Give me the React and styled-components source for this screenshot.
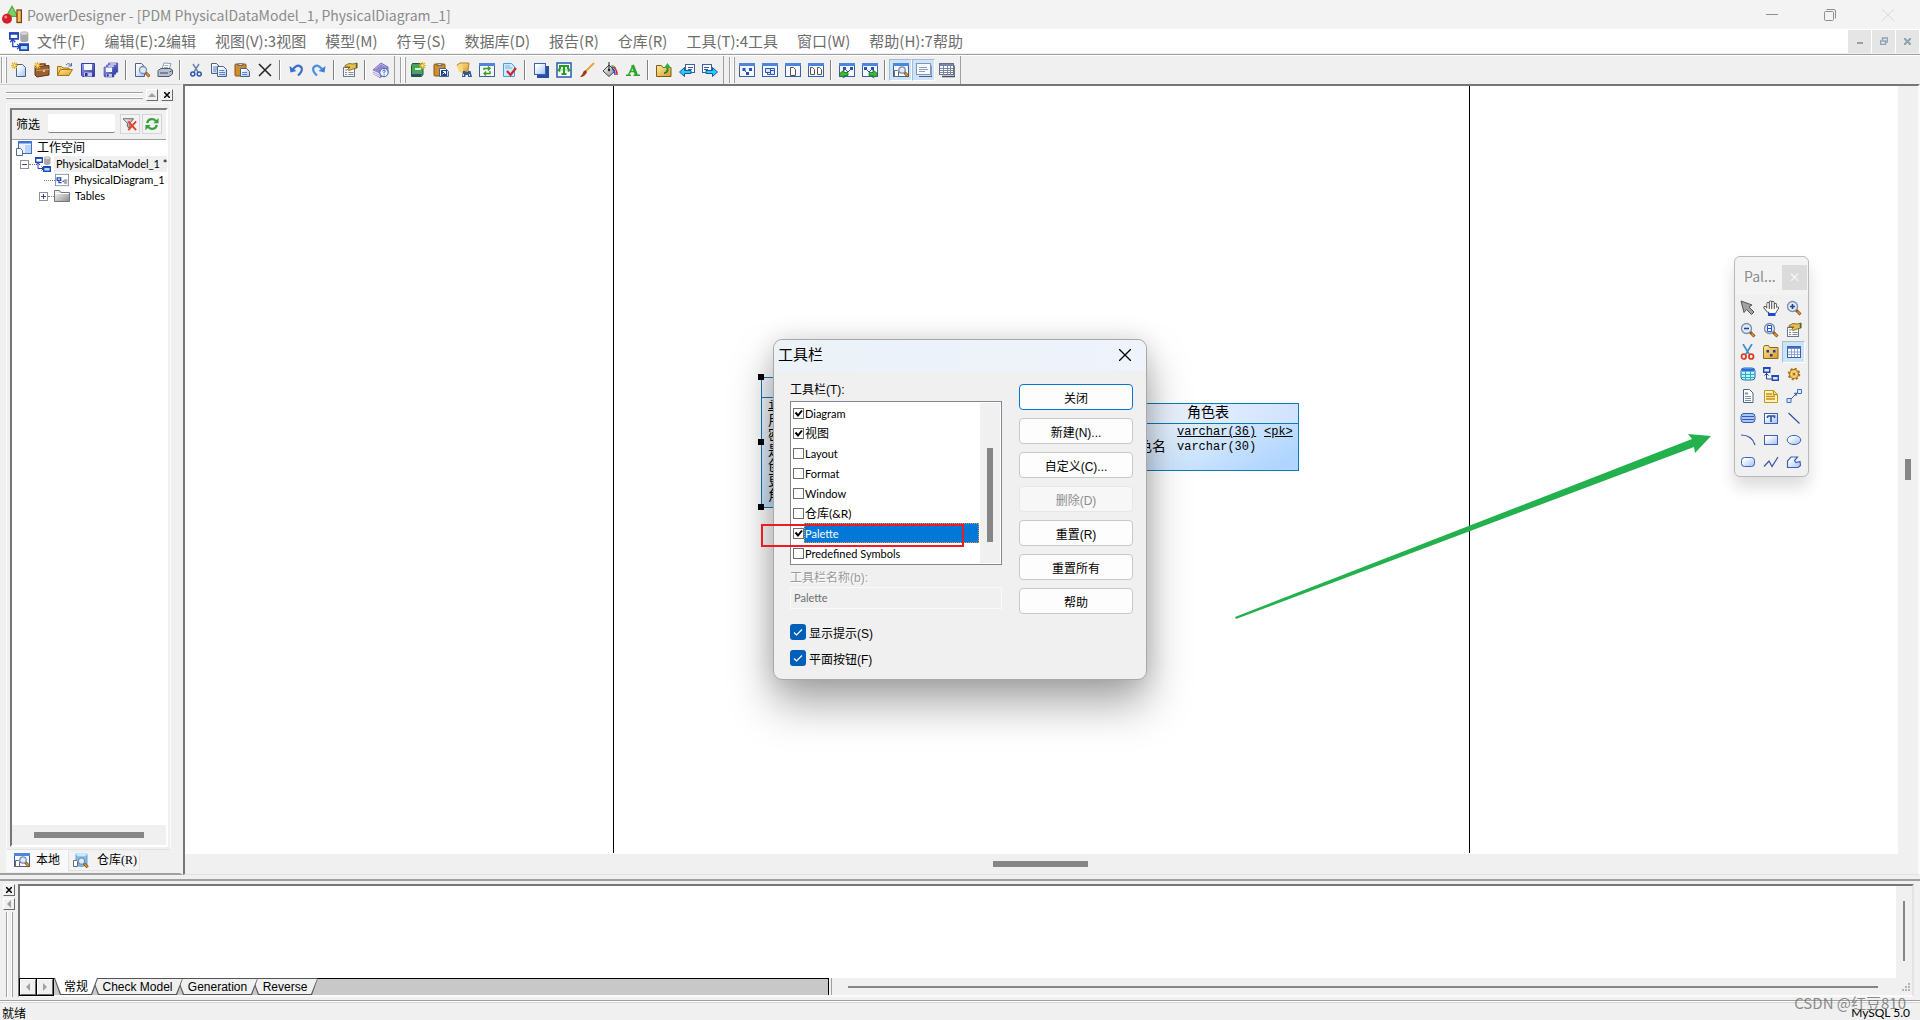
import React from "react";
import styled, { createGlobalStyle, css } from "styled-components";

const GlobalStyle = createGlobalStyle`
  * {
    box-sizing: border-box;
  }
  body {
    margin: 0;
    background: #f0f0f0;
    color: #000;
    font-family: "Liberation Sans", "Noto Sans CJK SC", sans-serif;
    font-size: 12px;
    overflow: hidden;
  }
  button,
  input {
    font: inherit;
    color: inherit;
    margin: 0;
    padding: 0;
  }
  svg {
    display: block;
    flex: none;
  }
`;

/* ---------- icons ---------- */

const Gradients = () => (
  <svg width="0" height="0" style={{ position: "absolute" }} aria-hidden="true">
    <defs>
      <linearGradient id="blue" x1="0" y1="0" x2="1" y2="1">
        <stop offset="0.2" stopColor="#fff" />
        <stop offset="1" stopColor="#9fc0fb" />
      </linearGradient>
      <linearGradient id="gold" x1="0" y1="0" x2="1" y2="1">
        <stop offset="0" stopColor="#ffeaa0" />
        <stop offset="1" stopColor="#dd9a22" />
      </linearGradient>
      <linearGradient id="navy" x1="0" y1="0" x2="1" y2="1">
        <stop offset="0" stopColor="#9aa8f4" />
        <stop offset="1" stopColor="#2b2f9c" />
      </linearGradient>
      <linearGradient id="grey" x1="0" y1="0" x2="1" y2="1">
        <stop offset="0" stopColor="#fff" />
        <stop offset="1" stopColor="#8c8c90" />
      </linearGradient>
    </defs>
  </svg>
);

const Spark = ({ x = 3.5, y = 3.5 }) => (
  <g stroke="#e8b422" strokeWidth="1.2">
    <path d={`M${x} ${y - 3.5}v7M${x - 3.5} ${y}h7M${x - 2.5} ${y - 2.5}l5 5M${x + 2.5} ${y - 2.5}l-5 5`} />
    <circle cx={x} cy={y} r="1" fill="#fff6b0" stroke="none" />
  </g>
);

const Lens = ({ x = 8, y = 7, r = 4 }) => (
  <g>
    <path d={`M${x + r * 0.7} ${y + r * 0.7}L${x + r + 3} ${y + r + 3}`} stroke="#8a4c12" strokeWidth="3" />
    <path d={`M${x + r} ${y + r}l2.5 2.5`} stroke="#e79a3c" strokeWidth="1.4" />
    <circle cx={x} cy={y} r={r} fill="#dcebfa" stroke="#7d8ea6" strokeWidth="1.3" />
  </g>
);

const Frame = ({ children }) => (
  <g>
    <rect x="0.5" y="1.5" width="15" height="13" fill="#f4f8ff" stroke="#3c5f9d" />
    <path d="M0 2.500h16" stroke="#4f86dd" strokeWidth="3" />
    {children}
  </g>
);

const Disk = () => (
  <g>
    <path d="M1.5 1.5h13v13h-12l-1-1z" fill="url(#navy)" stroke="#3a3fae" />
    <path d="M4 2h8v6H4z" fill="#f3f5ff" />
    <path d="M4 10.500h8v4H4z" fill="#c4c8ea" />
    <path d="M5 11h2.500v3H5z" fill="#2b2f8c" />
  </g>
);

const Page = ({ x = 3, y = 1, w = 10, h = 14 }) => (
  <path
    d={`M${x + 0.5} ${y + 0.5}h${w - 4}l3 3v${h - 4}h-${w - 1}z`}
    fill="url(#blue)"
    stroke="#4c6484"
  />
);

const Clip = () => (
  <g>
    <rect x="1" y="2" width="11" height="12" rx="1" fill="#cf8f2d" stroke="#8a5510" />
    <path d="M4 3.500V2h1.500q1-2 2 0H9v1.500z" fill="#ddd" stroke="#555" strokeWidth="0.8" />
  </g>
);

const Tables = () => (
  <g>
    <rect x="0.700" y="1.700" width="6.600" height="4.600" fill="#fff" stroke="#2447b8" strokeWidth="1.400" />
    <path d="M0 2h8" stroke="#2447b8" strokeWidth="2" />
    <rect x="8.700" y="10.700" width="6.600" height="4.600" fill="#a8e0f8" stroke="#2447b8" strokeWidth="1.400" />
    <path d="M8 11h8" stroke="#2447b8" strokeWidth="2" />
    <path d="M3 6.500v6h5.500" stroke="#2447b8" fill="none" />
    <path d="M1 9l2-2.500L5 9M6.500 10.500l2 2-2 2" stroke="#2447b8" fill="none" />
  </g>
);

const ICONS = {
  logo: (
    <g>
      <path d="M8 1l4.500 8h-9z" fill="#7ccf62" stroke="#58a845" />
      <circle cx="4" cy="11" r="4" fill="#d61e28" />
      <circle cx="3" cy="9.500" r="1.200" fill="#f2878b" />
      <rect x="12" y="4" width="3.500" height="10" fill="#f6c054" stroke="#7a3b18" />
    </g>
  ),
  model: (
    <g>
      <Tables />
      <path d="M9 2v6q3 2 6.500 0V2z" fill="#a9a9a9" />
      <ellipse cx="12.200" cy="2" rx="3.200" ry="1.400" fill="#d9d9d9" stroke="#999" strokeWidth="0.500" />
    </g>
  ),
  newFile: (
    <g>
      <Page x={5} y={2} w={10} h={13} />
      <Spark />
    </g>
  ),
  briefcase: (
    <g>
      <path d="M6 4V2h5v2" fill="none" stroke="#6b3a14" strokeWidth="1.500" />
      <path d="M1 4.500l14-1v9.500l-12 2-2-2z" fill="#9c5f34" stroke="#5f3413" />
      <path d="M2 8.500l13-1" stroke="#d5a276" />
      <path d="M9 8h2v2H9z" fill="#e8c090" />
      <Spark />
    </g>
  ),
  open: (
    <g>
      <path d="M.5 13.500v-9h4l1.500 1.500h6v2" fill="#f6cd63" stroke="#a87618" />
      <path d="M.5 13.500l3-6h12l-3.500 6z" fill="url(#gold)" stroke="#a87618" />
      <path d="M9 3q3-3 5 .5M14.500 1v3h-3" fill="none" stroke="#3d6fb0" />
    </g>
  ),
  save: <Disk />,
  saveAll: (
    <g>
      <g transform="translate(4.500 0) scale(.7)">
        <Disk />
      </g>
      <g transform="translate(2.500 2) scale(.7)">
        <Disk />
      </g>
      <g transform="translate(0 4) scale(.75)">
        <Disk />
      </g>
    </g>
  ),
  preview: (
    <g>
      <Page x={1} />
      <Lens x={9} y={8} r={3.5} />
    </g>
  ),
  print: (
    <g>
      <path d="M5 7l2-6 7 .5-2 6z" fill="#fff" stroke="#6c86ab" strokeWidth="0.800" />
      <path d="M7.500 3.500h4M7 5.500h4" stroke="#8aa0c0" strokeWidth="0.800" />
      <path d="M1 8.500l3-2h9l2.500 1.500v4L12 14.500H1z" fill="#b7c1d0" stroke="#4d5b70" />
      <path d="M3 11h8M12.500 10l2-1" stroke="#39465a" />
    </g>
  ),
  cut: (
    <g fill="none" strokeWidth="1.500">
      <path d="M5 2l5 8M11 2l-5 8" stroke="#6a86ad" />
      <circle cx="4.800" cy="12" r="2" stroke="#2c56ae" />
      <circle cx="11.200" cy="12" r="2" stroke="#2c56ae" />
    </g>
  ),
  copy: (
    <g>
      <Page x={0} y={1} w={9} h={11} />
      <path d="M2 5h4M2 7h4M2 9h3" stroke="#5c87c8" />
      <Page x={6} y={4} w={10} h={11} />
      <path d="M8 8.500h5M8 10.500h6M8 12.500h6" stroke="#5c87c8" />
    </g>
  ),
  paste: (
    <g>
      <Clip />
      <Page x={6} y={6} w={10} h={9} />
      <path d="M8 10.500h5M8 12.500h5" stroke="#5c87c8" />
    </g>
  ),
  remove: <path d="M2 2l12 12M14 2L2 14" stroke="#222" strokeWidth="1.500" />,
  undo: (
    <g>
      <path d="M5 7q5-6 8.500-1.500Q15 9 10 13.500" fill="none" stroke="#3a6fce" strokeWidth="2.200" />
      <path d="M1.500 4l1 6.500 6-1.500z" fill="#3a6fce" />
    </g>
  ),
  redo: (
    <g>
      <path d="M11 7Q6 1 2.500 5.500 1 9 6 13.500" fill="none" stroke="#4a90e0" strokeWidth="2.200" />
      <path d="M14.500 4l-1 6.500-6-1.500z" fill="#3a7fd8" />
    </g>
  ),
  props: (
    <g>
      <rect x="1.500" y="5.500" width="11" height="9" fill="#fbfbf4" stroke="#6d7690" />
      <path d="M3 8h2M3 10.500h2M3 12.500h2M6.500 10.500h5M6.500 12.500h5" stroke="#7c8cae" />
      <path d="M3 3.500l4-2 4 .5 4-1v5l-4 1-4 1.500-1.500-1L8 5H3z" fill="#e6c04e" stroke="#77571a" strokeWidth="0.800" />
      <path d="M14.500 1v5" stroke="#4c6a38" strokeWidth="1.500" />
    </g>
  ),
  help: (
    <g>
      <path d="M0 8l8-7 7 4v6l-8 4.500-7-4z" fill="#9486d0" stroke="#6a5aac" strokeWidth="0.800" />
      <path d="M0 9l7 3.500M0 11l7 3.500" stroke="#ece8fa" strokeWidth="1.200" fill="none" />
      <path d="M2 7l6-5 5 3" stroke="#b9aee6" fill="none" />
      <circle cx="11" cy="10.500" r="4.200" fill="#e9f1ff" stroke="#3c62b8" />
      <path d="M9.700 9.300q.3-1.300 1.500-1.200 1.400.3.800 1.400l-.9 1v.8M11.100 12.300v1" fill="none" stroke="#2c50a8" />
    </g>
  ),
  greenBook: (
    <g>
      <path d="M1.500 3.500l1-2H13v11l-1.500 2h-10z" fill="#4aa35c" stroke="#1d5a2e" />
      <path d="M5 6h6v2H5z" fill="#d5f0d8" />
      <path d="M1.500 13h10" stroke="#30477f" strokeWidth="2" />
      <Spark x={12.500} />
    </g>
  ),
  pasteLink: (
    <g>
      <Clip />
      <Page x={6} y={6} w={10} h={9} />
      <rect x="8" y="8" width="6" height="6" fill="#22418e" />
      <path d="M9.500 12.500l3-3M10 9.500h2.500v2.500" stroke="#fff" fill="none" />
    </g>
  ),
  find: (
    <g>
      <path d="M1 3l3-2h9l-1 8-6 1z" fill="url(#gold)" stroke="#b1842a" />
      <path d="M1 3l2 7 4 1V5z" fill="#f8d873" />
      <path d="M7 9h2.500v6H6zM12 9h2.500l1.500 6h-4zM9 10h3v3H9z" fill="#31588f" />
      <path d="M7.500 12v2M13.500 12v2" stroke="#bfe0ff" />
    </g>
  ),
  refreshWin: (
    <Frame>
      <path d="M5 8V6.500h5M9 4.500l2 2-2 2M11 9v2.500H6M7 9.500l-2 2 2 2" fill="none" stroke="#3f9b1e" strokeWidth="1.400" />
    </Frame>
  ),
  check: (
    <g>
      <path d="M1.500 1.500h8l3 3v10h-11z" fill="#cdeafc" stroke="#4a9ed8" />
      <path d="M3 4h5M3 6h7" stroke="#7bb4e4" />
      <path d="M5 9l3.500 4L14 6" fill="none" stroke="#cf2430" strokeWidth="2.200" />
    </g>
  ),
  shadow: (
    <g>
      <rect x="4" y="4" width="12" height="12" fill="#27509c" />
      <rect x="1.500" y="1.500" width="11" height="11" fill="url(#blue)" stroke="#3c62ad" />
    </g>
  ),
  textFit: (
    <g>
      <rect x="1" y="1" width="14" height="14" fill="#fff" stroke="#2b57b8" strokeWidth="1.500" />
      <path d="M3 3h10v4h-2V5H9v6h1.500v2h-5v-2H7V5H5v2H3z" fill="#22a022" />
      <path d="M1 8l3-2v4zM15 8l-3-2v4zM4 8h8" fill="#22a022" stroke="#22a022" strokeWidth="0.500" />
    </g>
  ),
  brush: (
    <g>
      <path d="M15 1L7 9" stroke="#e2a63a" strokeWidth="2" />
      <path d="M8 10L6.500 8Q4 9 3.500 12L1 15q5 0 7-5z" fill="#a03a1a" />
    </g>
  ),
  bucket: (
    <g>
      <path d="M1 9l6-6 6 6-6 5.500z" fill="url(#grey)" stroke="#444" />
      <path d="M7 0v8" stroke="#222" />
      <circle cx="7" cy="8" r="1.200" fill="#222" />
      <path d="M10 5q5 1 5 8" fill="none" stroke="#d8262a" strokeWidth="1.500" />
      <path d="M10 7q3 1 3 6" fill="none" stroke="#2a48d8" strokeWidth="1.500" />
      <path d="M9 4q3-1 5 2" fill="none" stroke="#26a03a" />
    </g>
  ),
  fontA: (
    <g fill="none" stroke="#2ba52b">
      <path d="M3.500 13L8 3.500" strokeWidth="1.500" />
      <path d="M7.500 3l4 10" strokeWidth="3" />
      <path d="M5 9.500h5M1 13.200h5M8.500 13.200H15" strokeWidth="1.600" />
    </g>
  ),
  folderUp: (
    <g>
      <path d="M.5 14.500V3.500h5l1.500 2h8v9z" fill="url(#gold)" stroke="#7c5a1a" />
      <path d="M8 11q4 0 3.500-5" fill="none" stroke="#1c8c28" strokeWidth="2" />
      <path d="M8 6l3.500-5L15 6z" fill="#2cb038" />
    </g>
  ),
  back: (
    <g>
      <rect x="6.500" y="2.500" width="9" height="8" fill="#fff" stroke="#3c5f9d" />
      <path d="M9 5.500h5M9 7.500h4" stroke="#3c5f9d" />
      <path d="M.5 10l5-4.500v3H12v3H5.500v3z" fill="#23cdf4" stroke="#1755a8" />
    </g>
  ),
  forward: (
    <g>
      <rect x=".5" y="2.500" width="9" height="8" fill="#fff" stroke="#3c5f9d" />
      <path d="M2 5.500h5M2 7.500h4" stroke="#3c5f9d" />
      <path d="M15.500 10l-5-4.500v3H4v3h6.500v3z" fill="#23cdf4" stroke="#1755a8" />
    </g>
  ),
  diagram: (
    <Frame>
      <path d="M3.500 6h3v3h-3zM10 6h3v3h-3zM7 10h3v3H7z" fill="#2a52b4" />
      <path d="M5 8l3 3" stroke="#2a52b4" fill="none" />
    </Frame>
  ),
  diagramSel: (
    <Frame>
      <path d="M3.500 6.500h5v4h-5zM8.500 8.500h4v4h-4zM5.500 10.500v2h3M8.500 6.500h4v2" fill="#dbe6ff" stroke="#2a52b4" />
    </Frame>
  ),
  pageOne: (
    <Frame>
      <path d="M5.500 5.500h3l2 2v6h-5z" fill="#fff" stroke="#555" />
    </Frame>
  ),
  pageTwo: (
    <Frame>
      <path d="M2.500 5.500h2l2 2v5h-4zM9.500 5.500h2l2 2v5h-4z" fill="#fff" stroke="#555" />
    </Frame>
  ),
  diagramPrev: (
    <Frame>
      <path d="M4 5h3v3H4zM11 5h3v3h-3z" fill="#2a52b4" />
      <path d="M6 7l3 3 3-3" stroke="#2a52b4" fill="none" />
      <path d="M0 12l5-4v2.500h4v3H5V16z" fill="#3cb83c" stroke="#156e1d" strokeWidth="0.800" />
    </Frame>
  ),
  diagramNext: (
    <Frame>
      <path d="M2 5h3v3H2zM9 5h3v3H9z" fill="#2a52b4" />
      <path d="M4 7l3 3 3-3" stroke="#2a52b4" fill="none" />
      <path d="M16 12l-5-4v2.500H7v3h4V16z" fill="#3cb83c" stroke="#156e1d" strokeWidth="0.800" />
    </Frame>
  ),
  browser: (
    <Frame>
      <path d="M1.500 8.500h3l1 1v5h-4z" fill="#fff" stroke="#667" />
      <Lens x={9} y={8} r={3.200} />
    </Frame>
  ),
  output: (
    <g>
      <path d="M3 14.500h13v-11" fill="none" stroke="#4a5a80" />
      <rect x=".5" y="1.500" width="14" height="11" fill="#f7faff" stroke="#8193b8" />
      <path d="M3 5.500h8M3 7.500h9M3 9.500h6" stroke="#8f9fc4" />
    </g>
  ),
  results: (
    <g>
      <path d="M3 14.500h13v-11" fill="none" stroke="#4a4a60" strokeWidth="1.500" />
      <rect x=".5" y="1.500" width="14" height="11" fill="#fff" stroke="#66708c" />
      <path d="M1 3h13" stroke="#7a86a8" strokeWidth="2" />
      <path d="M1 6.500h13M1 8.500h13M1 10.500h13M4.500 4v9M8.500 4v9M11.500 4v9" stroke="#7a86a8" />
    </g>
  ),
  filterOff: (
    <g>
      <path d="M0 2h12L8 7v6l-3-2V7z" fill="url(#grey)" stroke="#555" />
      <path d="M6 5l9 10M15 5L6 15" stroke="#e8442c" strokeWidth="2.200" />
    </g>
  ),
  refresh: (
    <g fill="none" stroke="#35a03c" strokeWidth="2.600">
      <path d="M2.500 7q1-5 6-4.500 2 0 4 2M13.500 9q-1 5-6 4.500-2 0-4-2" />
      <path d="M15.500 1v6h-6zM.5 15V9h6z" fill="#35a03c" stroke="none" />
    </g>
  ),
  workspace: (
    <g>
      <rect x="2.500" y="1.500" width="13" height="12" fill="#eaf3ff" stroke="#3f6fc0" />
      <path d="M2 2.500h14" stroke="#3978dc" strokeWidth="2" />
      <path d="M9 5h6v8H9z" fill="#b8d4fb" />
      <path d="M.5 8.500h4l2 2v5h-6z" fill="#fff" stroke="#556a8a" />
    </g>
  ),
  diagramNode: (
    <g>
      <rect x=".5" y="1.500" width="15" height="13" fill="#fff" stroke="#7c8cae" />
      <path d="M2.500 5.500h4v3h-4zM8.500 9.500h3M4.500 9v2h3" fill="none" stroke="#2447b8" strokeWidth="1.500" />
      <path d="M10 7v5q2 1.500 4 0V7z" fill="#a9a9a9" />
    </g>
  ),
  folder: (
    <g>
      <path d="M.5 13.500v-11h5l1.500 2h8.500v9z" fill="url(#grey)" stroke="#777" />
      <path d="M1 5.500h14" stroke="#fff" />
    </g>
  ),
  repoTab: (
    <g>
      <path d="M3 2v11q5 3 11 0V2z" fill="#7fc3f2" stroke="#3f8fce" strokeWidth="0.800" />
      <ellipse cx="8.500" cy="2.500" rx="5.500" ry="1.800" fill="#c8e8fb" />
      <path d="M.5 8.500h3l1 1v5h-4z" fill="#fff" stroke="#667" />
      <Lens x={8.500} y={9} r={3.200} />
    </g>
  ),
  arrow: (
    <path d="M1 1l11 4-3 2 5 5-2.500 2.500-5-5L4 12.500z" fill="#a2a2a2" stroke="#555" />
  ),
  hand: (
    <g strokeLinecap="round">
      <path
        d="M2 7.500L5 11M5 3.500v6M7.500 2v7M10 2.500v6.500M12.500 4.500v5.500M14.500 8L12 12"
        stroke="#333"
        strokeWidth="3"
      />
      <path d="M4.500 8.500h8.500V12l-1 1.500H6.500L4 10.500z" fill="#fff" stroke="#333" />
      <path
        d="M2 7.500L5 11M5 3.500v6M7.500 2v7M10 2.500v6.500M12.500 4.500v5.500M14.500 8L12 12"
        stroke="#fff"
        strokeWidth="1.600"
      />
      <path d="M5 13h7.500v3H5z" fill="#1c4bd0" />
    </g>
  ),
  zoomIn: (
    <g>
      <Lens x={6.500} y={6.500} r={5} />
      <path d="M4 6.500h5M6.500 4v5" stroke="#2a3f9c" strokeWidth="1.600" />
    </g>
  ),
  zoomOut: (
    <g>
      <Lens x={6.500} y={6.500} r={5} />
      <path d="M4 6.500h5" stroke="#2a3f9c" strokeWidth="1.600" />
    </g>
  ),
  zoomPage: (
    <g>
      <Lens x={6.500} y={6.500} r={5} />
      <path d="M4.500 3.500h4v6h-4zM4.500 6.500h4" fill="#fff" stroke="#2a55d0" />
    </g>
  ),
  scissors: (
    <g fill="none" strokeWidth="1.700">
      <path d="M3 0l6 10M12 0L6 10" stroke="#3d8fce" />
      <ellipse cx="3.800" cy="12.500" rx="2.300" ry="2.500" stroke="#e0351c" />
      <ellipse cx="11.200" cy="12.500" rx="2.300" ry="2.500" stroke="#e0351c" />
    </g>
  ),
  package: (
    <g>
      <path d="M.5 14.500v-11l1-2h4l1 2h8.500v11z" fill="url(#gold)" stroke="#8c6a20" />
      <path d="M3.500 6h2.500v2.500H3.500zM10 6h2.500v2.500H10zM7 10h2.500v2.500H7z" fill="#1f3f8c" />
    </g>
  ),
  table: (
    <g>
      <rect x="1.500" y="2.500" width="13" height="11" fill="#fff" stroke="#3c5f9d" />
      <path d="M1 3.500h14" stroke="#3d68c4" strokeWidth="2.500" />
      <path d="M2 8h12M2 10.500h12M5.500 5v8M8.500 5v8M11.500 5v8" stroke="#8ba5d8" />
    </g>
  ),
  view: (
    <g>
      <rect x="1" y="2" width="14" height="12" rx="3" fill="#b6fafa" stroke="#2c6dc4" />
      <path d="M2 4h12" stroke="#2f6ce0" strokeWidth="3" />
      <path d="M1 8.500h14M1 11.500h14M5.500 5v9M10.500 5v9" stroke="#35a5c4" />
    </g>
  ),
  reference: (
    <g>
      <path d="M.7 1.700h6v4.600h-6zM9.300 9.700h6v4.600h-6z" fill="#dbe8ff" stroke="#2447b8" strokeWidth="1.400" />
      <path d="M0 2h7.500M8.500 10H16" stroke="#2447b8" strokeWidth="2" />
      <path d="M3.500 7v6H9M1.500 9.500l2-2 2 2" fill="none" stroke="#24408c" />
    </g>
  ),
  procedure: (
    <g>
      <circle cx="8" cy="8" r="4.500" fill="#f5c35a" stroke="#a8701a" strokeWidth="1.200" />
      <circle cx="8" cy="8" r="5.500" fill="none" stroke="#a8701a" strokeWidth="1.600" strokeDasharray="2.200 2.100" />
      <path d="M8 5v6M5 8h6" stroke="#fff2c8" />
      <circle cx="8" cy="8" r="1.500" fill="#a8701a" />
    </g>
  ),
  file: (
    <g>
      <path d="M3.500 1.500h6l3.500 3.500v9.500H3.500z" fill="#fff" stroke="#4c6484" />
      <path d="M5 4.500h3v2H5z" fill="#7f93b0" />
      <path d="M5 8.500h6M5 10.500h6M5 12.500h6" stroke="#7f93b0" />
    </g>
  ),
  note: (
    <g>
      <path d="M1.500 2.500h9l4 4v8h-13z" fill="#fff4c0" stroke="#c89418" />
      <path d="M10.500 2.500v4h4M3 6h6M3 8.500h9M3 11h9" stroke="#c89418" strokeWidth="1.400" fill="none" />
    </g>
  ),
  link: (
    <g>
      <path d="M4 12L11.500 4.500M8 5.500l2.500-.5-.5 3" fill="none" stroke="#3758a4" />
      <path d="M1 10.500h4v4H1zM11.500 1.500h4v4h-4z" fill="#dbe8ff" stroke="#3d6fd0" />
    </g>
  ),
  title: (
    <g>
      <rect x="1" y="3.500" width="14" height="9" rx="3" fill="#a9c6fb" stroke="#3558b0" />
      <path d="M2 6.500h12M2 9.500h12" stroke="#3558b0" />
    </g>
  ),
  textBox: (
    <g>
      <rect x="1.500" y="3.500" width="13" height="10" fill="url(#blue)" stroke="#3c62b8" />
      <path d="M4.500 6h7v2M8 6v6M4.500 6v2" fill="none" stroke="#2f4fa0" strokeWidth="1.600" />
    </g>
  ),
  line: <path d="M2.500 3l11 10.500" stroke="#3553a4" strokeWidth="1.200" />,
  arc: <path d="M1 3q11 0 14 10" fill="none" stroke="#3553a4" strokeWidth="1.200" />,
  rect: <rect x="1.500" y="3.500" width="13" height="9" fill="url(#blue)" stroke="#3c62b8" />,
  ellipse: <ellipse cx="8" cy="8" rx="6.800" ry="4.600" fill="url(#blue)" stroke="#3c62b8" />,
  roundRect: <rect x="1.500" y="3.500" width="13" height="9" rx="3" fill="url(#blue)" stroke="#3c62b8" />,
  polyline: <path d="M1 12.500L6 7l3 5.500L15 3" fill="none" stroke="#3553a4" strokeWidth="1.200" />,
  polygon: (
    <path d="M1.500 13.500V7L5 3h6.500l-3 3.500 1.500 2 4-1 .5 4-2.500 2z" fill="url(#blue)" stroke="#3c62b8" strokeWidth="1.200" />
  ),
};

const Icon = ({ name, size = 16 }) => (
  <svg width={size} height={size} viewBox="0 0 16 16" fill="none" aria-hidden="true">
    {ICONS[name]}
  </svg>
);

/* ---------- window frame ---------- */

const Window = styled.div`
  display: flex;
  flex-direction: column;
  min-height: 100vh;
`;

const TitleBar = styled.header`
  display: flex;
  align-items: center;
  height: 29px;
  padding: 0 6px 0 2px;
  gap: 5px;
  background: #f3f3f3;
  color: #8b8b8b;
  font-family: "Noto Sans CJK SC", sans-serif;
  font-size: 14px;
  h1 {
    flex: 1;
    margin: 0;
    font-size: inherit;
    font-weight: 400;
    line-height: 24px;
    white-space: nowrap;
  }
`;

const CaptionButton = styled.button`
  display: flex;
  align-items: center;
  justify-content: center;
  width: 53px;
  height: 28px;
  border: 0;
  background: none;
  color: ${({ $faint }) => ($faint ? "#dadada" : "#8f8f8f")};
`;

const MenuBar = styled.nav`
  display: flex;
  align-items: center;
  height: 24px;
  padding-left: 9px;
  background: #fff;
`;

const MenuList = styled.div`
  display: flex;
  flex: 1;
  gap: 19px;
  padding-left: 8px;
`;

const MenuItem = styled.button`
  border: 0;
  background: none;
  color: #6d6d6d;
  font-family: "Noto Sans CJK SC", sans-serif;
  font-size: 15px;
  line-height: 24px;
  white-space: nowrap;
`;

const ChildButton = styled.button`
  display: flex;
  align-items: center;
  justify-content: center;
  width: 23px;
  height: 23px;
  margin-right: 1px;
  border: 0;
  background: #e5e5e5;
  color: #8fa2b3;
`;

const ToolbarRow = styled.div`
  display: flex;
  height: 31px;
  border-top: 1px solid #f0f0f0;
  background: linear-gradient(#a0a0a0 1px, #fff 1px, #fff 2px, #f0f0f0 2px);
  padding-top: 2px;
`;

const Toolbar = styled.div`
  display: flex;
  align-items: center;
  padding: 0 2px 0 ${({ $first }) => ($first ? 0 : 4)}px;
  border-right: 1px solid #a0a0a0;
`;

const Grip = styled.span`
  width: 6px;
  height: 26px;
  margin-left: 1px;
  border: 1px solid #a0a0a0;
  border-width: 0 1px;
  background: linear-gradient(90deg, #fff 1px, #f0f0f0 1px, #f0f0f0 3px, #fff 3px);
`;

const ToolButton = styled.button`
  display: flex;
  align-items: center;
  justify-content: center;
  width: 23px;
  height: 22px;
  border: 1px solid transparent;
  background: none;
  ${({ $pressed }) =>
    $pressed &&
    css`
      background: #cce4f7;
      border-color: #a6bccc #fff #fff #a6bccc;
    `}
`;

const Divider = styled.span`
  width: 2px;
  height: 20px;
  margin: 0 3px;
  border-left: 1px solid #808080;
  background: #fff;
`;

/* ---------- workspace ---------- */

const Workspace = styled.main`
  display: flex;
  flex: 1;
`;

const BrowserPane = styled.aside`
  display: flex;
  flex: none;
  flex-direction: column;
  width: 183px;
  margin-bottom: 1px;
  padding: 4px 7px 1px 6px;
  border-top: 1px solid #d0d0d0;
  border-right: 3px solid #f0f0f0;
  border-bottom: 2px solid #a0a0a0;
`;

const PaneHeader = styled.div`
  display: flex;
  align-items: center;
  gap: 3px;
  height: 12px;
  margin-bottom: 2px;
`;

const HorizontalGrip = styled.span`
  flex: 1;
  height: 7px;
  border: 1px solid #a0a0a0;
  border-width: 1px 0;
  background: linear-gradient(#fff 1px, #f0f0f0 1px, #f0f0f0 4px, #fff 4px);
`;

const SmallButton = styled.button`
  display: flex;
  align-items: center;
  justify-content: center;
  width: 12px;
  height: 12px;
  border: 1px solid;
  border-color: #fff #696969 #696969 #fff;
  background: #f0f0f0;
`;

const BrowserFrame = styled.div`
  display: flex;
  flex: 1;
  margin-right: 2px;
  padding: 4px 2px 2px 3px;
  border: 1px solid #fafafa;
  border-bottom-color: #e3e3e3;
`;

const BrowserBox = styled.div`
  display: flex;
  flex: 1;
  flex-direction: column;
  min-width: 0;
  border: 2px solid;
  border-color: #808080 #fff #fff #767676;
`;

const FilterRow = styled.div`
  display: flex;
  align-items: center;
  gap: 2px;
  height: 29px;
  padding: 0 4px 2px;
  label {
    width: 30px;
    white-space: nowrap;
  }
  input {
    flex: 1;
    min-width: 0;
    height: 19px;
    margin-right: 3px;
    border: 0;
    border-bottom: 1px solid #868686;
    border-radius: 2px;
    background: #fff;
  }
  button {
    display: flex;
    align-items: center;
    justify-content: center;
    width: 20px;
    height: 20px;
    border: 1px solid #d4d4d4;
    background: #f3f3f3;
  }
`;

const Tree = styled.ul`
  flex: 1;
  margin: 0;
  padding: 0;
  list-style: none;
  background: #fff;
  border-top: 1px solid #a0a0a0;
`;

const TreeItem = styled.li`
  display: flex;
  align-items: center;
  gap: 3px;
  height: 16px;
  padding-left: ${({ $indent }) => $indent}px;
  font-family: Lato, "Noto Sans CJK SC", sans-serif;
  font-size: ${({ $cjk }) => ($cjk ? 12 : 11)}px;
  white-space: nowrap;
  span {
    padding-left: 2px;
    line-height: 16px;
    background: ${({ $current }) => ($current ? "#f0f0f0" : "none")};
  }
`;

const Toggle = styled.button`
  flex: none;
  width: 9px;
  height: 9px;
  border: 1px solid #919191;
  background:
    linear-gradient(#2b4b9b, #2b4b9b) center / 5px 1px no-repeat,
    ${({ $closed }) => $closed && "linear-gradient(#2b4b9b, #2b4b9b) center / 1px 5px no-repeat,"}
    #fff;
`;

const Dots = styled.i`
  flex: none;
  width: ${({ $width }) => $width}px;
  margin: 0 -3px 0 -3px;
  border-top: 1px dotted #808080;
`;

const ScrollTrack = styled.div`
  display: flex;
  align-items: center;
  height: ${({ $size }) => $size}px;
  padding: 0 ${({ $end = 0 }) => $end}px 0 ${({ $start = 0 }) => $start}px;
  background: #f0f0f0;
`;

const ScrollThumb = styled.div`
  flex: ${({ $width }) => ($width ? "none" : 1)};
  width: ${({ $width }) => $width}px;
  height: ${({ $height }) => $height}px;
  background: #868686;
`;

const BrowserTabs = styled.div`
  display: flex;
  height: 22px;
`;

const BrowserTab = styled.button`
  display: flex;
  align-items: center;
  gap: ${({ $active }) => ($active ? 6 : 8)}px;
  height: ${({ $active }) => ($active ? 22 : 19)}px;
  margin-top: ${({ $active }) => ($active ? 0 : 2)}px;
  padding: 0 ${({ $active }) => ($active ? "7px 2px" : "2px 3px 4px")};
  border: 1px solid ${({ $active }) => ($active ? "#f9f9f9" : "#e3e3e3")};
  border-top: 0;
  background: ${({ $active }) => ($active ? "#f9f9f9" : "#f3f3f3")};
  font-family: "Liberation Serif", "Noto Sans CJK SC", serif;
  font-size: 12px;
  line-height: 16px;
  white-space: nowrap;
`;

const CanvasPane = styled.section`
  display: grid;
  flex: 1;
  grid-template-columns: 1fr 20px;
  grid-template-rows: 1fr 20px;
  margin-bottom: 1px;
  border: 2px solid;
  border-color: #767676 #fafafa #e3e3e3 #767676;
  border-width: 2px 2px 1px 2px;
`;

const Canvas = styled.div`
  position: relative;
  background: #fff;
  overflow: hidden;
`;

const PageEdge = styled.i`
  position: absolute;
  top: 0;
  bottom: 1px;
  left: ${({ $left }) => $left}px;
  border-left: 1px solid #000;
`;

const VerticalTrack = styled.div`
  display: flex;
  flex-direction: column;
  align-items: center;
  padding-top: ${({ $start }) => $start}px;
  background: #f0f0f0;
`;

const VerticalThumb = styled.div`
  width: ${({ $width }) => $width}px;
  height: ${({ $height }) => $height}px;
  background: #868686;
`;

const Entity = styled.article`
  position: absolute;
  left: ${({ $x }) => $x}px;
  top: ${({ $y }) => $y}px;
  width: 182px;
  height: ${({ $height }) => $height}px;
  border: 1px solid #0a7cba;
  background: linear-gradient(150deg, #fff, #b0d5ff 90%);
  font-family: "Liberation Mono", "Noto Sans CJK SC", monospace;
  font-size: 12px;
  h2 {
    height: 20px;
    margin: 0;
    border-bottom: 1px solid #0a7cba;
    background: linear-gradient(90deg, #f4f8ff, #cfe2ff);
    font-size: 14px;
    font-weight: 400;
    line-height: 19px;
    text-align: center;
  }
`;

const Columns = styled.div`
  display: grid;
  grid-template-columns: 53px 87px 1fr;
  grid-auto-rows: 15px;
  padding: 1px 0 0 6px;
  line-height: 15px;
  white-space: nowrap;
  b {
    font-size: 14px;
    font-weight: 400;
  }
`;

const Handle = styled.i`
  position: absolute;
  left: -4px;
  top: ${({ $top }) => $top}px;
  width: 6px;
  height: 6px;
  background: #000;
`;

/* ---------- floating windows ---------- */

const Arrow = styled.svg`
  position: absolute;
  left: 1235px;
  top: 434px;
`;

const PaletteWindow = styled.section`
  position: absolute;
  left: 1734px;
  top: 256px;
  width: 75px;
  height: 221px;
  border: 1px solid #b9b9b9;
  border-radius: 6px;
  background: #f0f0f0;
  box-shadow: 0 10px 16px rgba(0, 0, 0, 0.14);
`;

const PaletteTitle = styled.div`
  display: flex;
  align-items: center;
  justify-content: space-between;
  height: 38px;
  padding: 2px 1px 0 9px;
  border-radius: 6px 6px 0 0;
  background: #f3f3f3;
  color: #8b8b8b;
  font-family: "Noto Sans CJK SC", sans-serif;
  font-size: 14px;
  line-height: 20px;
  span {
    padding-bottom: 3px;
  }
  button {
    width: 25px;
    height: 25px;
    border: 0;
    background: #dbdbdb;
    color: #fff;
    font-size: 12px;
  }
`;

const PaletteGrid = styled.div`
  display: grid;
  grid-template-columns: repeat(3, 23px);
  grid-auto-rows: 22px;
  padding: 2px 0 0 1px;
`;

const Dialog = styled.section`
  position: absolute;
  left: 773px;
  top: 339px;
  width: 374px;
  height: 341px;
  border: 1px solid #a8a8a8;
  border-radius: 9px;
  background: #f0f0f0;
  box-shadow:
    0 24px 44px rgba(0, 0, 0, 0.34),
    0 0 24px rgba(0, 0, 0, 0.12);
`;

const DialogTitle = styled.div`
  display: flex;
  align-items: center;
  justify-content: space-between;
  height: 31px;
  padding: 0 15px 2px 4px;
  border-radius: 9px 9px 0 0;
  background: linear-gradient(90deg, #ebf2f8, #eff3fb);
  h2 {
    margin: 0;
    font-size: 15px;
    font-weight: 400;
    line-height: 20px;
  }
  button {
    border: 0;
    background: none;
  }
`;

const DialogBody = styled.div`
  display: flex;
  gap: 17px;
  padding: 11px 13px 0 16px;
`;

const Options = styled.div`
  flex: 1;
`;

const Caption = styled.label`
  display: block;
  height: ${({ $disabled }) => ($disabled ? 22 : 19)}px;
  color: ${({ $disabled }) => ($disabled ? "#9a9a9a" : "#000")};
  line-height: ${({ $disabled }) => ($disabled ? 26 : 16)}px;
  text-shadow: ${({ $disabled }) => ($disabled ? "1px 1px #fff" : "none")};
`;

const ListBox = styled.div`
  display: flex;
  height: 164px;
  padding: 1px;
  border: 1px solid #828790;
  background: #fff;
`;

const ListRows = styled.div`
  flex: 1;
`;

const ListRow = styled.label`
  display: flex;
  align-items: center;
  height: 20px;
  padding-left: 1px;
  font-family: Lato, "Noto Sans CJK SC", sans-serif;
  font-size: ${({ $cjk }) => ($cjk ? 12 : 11)}px;
`;

const RowText = styled.span`
  flex: 1;
  height: 20px;
  margin-right: 1px;
  border: 1px dotted ${({ $selected }) => ($selected ? "#f0963c" : "transparent")};
  background: ${({ $selected }) => ($selected ? "#0078d7" : "none")};
  color: ${({ $selected }) => ($selected ? "#fff" : "#000")};
  line-height: 19px;
`;

const TickBox = styled.span`
  position: relative;
  flex: none;
  input {
    display: block;
    appearance: none;
    width: 11px;
    height: 11px;
    border: 1px solid #6e6e6e;
    background: #fff;
  }
  svg {
    position: absolute;
    inset: 0;
    pointer-events: none;
  }
`;

const NameInput = styled.input`
  width: 100%;
  height: 22px;
  padding: 0 3px 2px;
  border: 1px solid #fafafa;
  background: #f0f0f0;
  color: #6d6d6d;
  font-family: Lato, sans-serif;
  font-size: 11px;
`;

const Switches = styled.div`
  display: grid;
  grid-auto-rows: 26px;
  margin-top: 10px;
`;

const SwitchRow = styled.label`
  display: flex;
  align-items: center;
  gap: 3px;
`;

const BlueBox = styled.span`
  position: relative;
  width: 16px;
  height: 16px;
  input {
    display: block;
    appearance: none;
    width: 16px;
    height: 16px;
    border-radius: 3px;
    background: #005fb8;
  }
  svg {
    position: absolute;
    inset: 0;
    pointer-events: none;
  }
`;

const Actions = styled.div`
  display: flex;
  flex-direction: column;
  gap: 8px;
  width: 114px;
  padding-top: 2px;
`;

const ActionButton = styled.button`
  height: 26px;
  border: 1px solid ${({ $primary }) => ($primary ? "#0078d4" : "#c8c8c8")};
  border-radius: 4px;
  background: #fdfdfd;
  &:disabled {
    border-color: #e6e6e6;
    background: #f7f7f7;
    color: #8d8d8d;
  }
`;

const Highlight = styled.div`
  position: absolute;
  left: 761px;
  top: 524px;
  width: 203px;
  height: 23px;
  border: 2px solid #ed1c24;
  pointer-events: none;
`;

/* ---------- output and status ---------- */

const OutputPane = styled.section`
  display: flex;
  height: 121px;
  margin-top: 3px;
  padding: 3px 6px 3px 3px;
  border-top: 2px solid #000;
  border-image: linear-gradient(#a0a0a0 50%, #000 50%) 2 0 0 0;
`;

const OutputSide = styled.div`
  display: flex;
  flex-direction: column;
  gap: 2px;
  width: 15px;
`;

const VerticalGrip = styled.span`
  flex: 1;
  width: 7px;
  margin-left: 3px;
  border: 1px solid #a0a0a0;
  border-width: 0 1px;
  background: linear-gradient(90deg, #fff 1px, #f0f0f0 1px, #f0f0f0 4px, #fff 4px);
`;

const OutputBox = styled.div`
  display: grid;
  flex: 1;
  grid-template-columns: 1fr 16px;
  grid-template-rows: 1fr 17px;
  border: 2px solid;
  border-color: #767676 #e3e3e3 #fafafa #767676;
`;

const OutputText = styled.div`
  background: #fff;
`;

const OutputFooter = styled.div`
  display: grid;
  grid-template-columns: 809px 1fr;
  column-gap: 2px;
  background: #f0f0f0;
`;

const TabStrip = styled.div`
  display: flex;
  border: 1px solid #000;
  border-width: 1px 1px 0 0;
  background: #c8c8c8;
`;

const OutputScroll = styled(ScrollTrack)`
  border-left: 1px solid #a0a0a0;
`;

const StripButton = styled(SmallButton)`
  width: 16px;
  height: 16px;
  margin-right: 1px;
  outline: 1px solid #000;
`;

const StripTab = styled.button`
  position: relative;
  z-index: ${({ $order }) => $order};
  width: ${({ $width }) => $width}px;
  margin: -1px -6px 0 0;
  border: 0;
  background: none;
  line-height: 16px;
  white-space: nowrap;
  &::before,
  &::after {
    content: "";
    position: absolute;
    z-index: -1;
    inset: 0;
    background: #555;
    clip-path: polygon(0 0, 100% 0, calc(100% - 6px) 100%, 6px 100%);
  }
  &::after {
    inset: ${({ $active }) => ($active ? 0 : 1)}px 1px 1px;
    background: ${({ $active }) => ($active ? "#fff" : "#f0f0f0")};
  }
`;

const StatusBar = styled.footer`
  display: flex;
  align-items: center;
  justify-content: space-between;
  height: 20px;
  padding: 3px 10px 0 2px;
  border-top: 1px solid #a0a0a0;
  background: linear-gradient(#fff 1px, #d9d9d9 1px, #d9d9d9 2px, #f0f0f0 2px);
  font-family: Lato, "Noto Sans CJK SC", sans-serif;
`;

const Watermark = styled.div`
  position: absolute;
  right: 14px;
  bottom: 5px;
  color: rgba(110, 110, 110, 0.8);
  font-family: "Noto Sans CJK SC", sans-serif;
  font-size: 15px;
  line-height: 24px;
`;

/* ---------- data ---------- */

const MENUS = [
  "文件(F)",
  "编辑(E):2编辑",
  "视图(V):3视图",
  "模型(M)",
  "符号(S)",
  "数据库(D)",
  "报告(R)",
  "仓库(R)",
  "工具(T):4工具",
  "窗口(W)",
  "帮助(H):7帮助",
];

const TOOLBARS = [
  "newFile briefcase open save saveAll | preview print | cut copy paste remove | undo redo | props | help",
  "greenBook pasteLink find refreshWin check | shadow textFit brush bucket fontA | folderUp back forward",
  "diagram diagramSel pageOne pageTwo | diagramPrev diagramNext | browser* output* results",
];

const PALETTE =
  "arrow hand zoomIn zoomOut zoomPage props scissors package table* view reference procedure file note link title textBox line arc rect ellipse roundRect polyline polygon";

const LIST = [
  { label: "Diagram", checked: true },
  { label: "视图", checked: true, cjk: true },
  { label: "Layout" },
  { label: "Format" },
  { label: "Window" },
  { label: "仓库(&R)", cjk: true },
  { label: "Palette", checked: true, selected: true },
  { label: "Predefined Symbols" },
];

const ACTIONS = [
  { label: "关闭", primary: true },
  { label: "新建(N)..." },
  { label: "自定义(C)..." },
  { label: "删除(D)", disabled: true },
  { label: "重置(R)" },
  { label: "重置所有" },
  { label: "帮助" },
];

const OUTPUT_TABS = [
  { label: "常规", width: 44 },
  { label: "Check Model", width: 91 },
  { label: "Generation", width: 81 },
  { label: "Reverse", width: 66 },
];

const renderTools = (names) =>
  names.split(" ").map((name, i) => {
    if (name === "|") return <Divider key={i} />;
    const icon = name.replace("*", "");
    return (
      <ToolButton key={i} aria-label={icon} $pressed={name.endsWith("*")}>
        <Icon name={icon} />
      </ToolButton>
    );
  });

const Cross = ({ size = 12, width = 1 }) => (
  <svg width={size} height={size} viewBox="0 0 12 12">
    <path d="M0 0l12 12M12 0L0 12" stroke="currentColor" strokeWidth={width} />
  </svg>
);

const Triangle = ({ d }) => (
  <svg width="8" height="8" viewBox="0 0 8 8">
    <path d={d} fill="#a0a0a0" />
  </svg>
);

const ToolbarDialog = () => (
  <Dialog role="dialog" aria-labelledby="dialog-title">
    <DialogTitle>
      <h2 id="dialog-title">工具栏</h2>
      <button aria-label="close">
        <Cross size={12} width={1.3} />
      </button>
    </DialogTitle>
    <DialogBody>
      <Options>
        <Caption as="div">工具栏(T):</Caption>
        <ListBox>
          <ListRows>
            {LIST.map(({ label, checked, selected, cjk }) => (
              <ListRow key={label} $cjk={cjk}>
                <TickBox>
                  <input type="checkbox" defaultChecked={checked} />
                  {checked && (
                    <svg viewBox="0 0 11 11">
                      <path d="M2.500 4.500l2.500 3 4-5" fill="none" stroke="#000" strokeWidth="2" />
                    </svg>
                  )}
                </TickBox>
                <RowText $selected={selected}>{label}</RowText>
              </ListRow>
            ))}
          </ListRows>
          <VerticalTrack $start={45} style={{ width: 20 }}>
            <VerticalThumb $width={6} $height={94} />
          </VerticalTrack>
        </ListBox>
        <Caption $disabled htmlFor="toolbar-name">
          工具栏名称(b):
        </Caption>
        <NameInput id="toolbar-name" defaultValue="Palette" disabled />
        <Switches>
          {["显示提示(S)", "平面按钮(F)"].map((label) => (
            <SwitchRow key={label}>
              <BlueBox>
                <input type="checkbox" defaultChecked />
                <svg viewBox="0 0 16 16">
                  <path d="M4 8.500l2.500 2.500L12 5.500" fill="none" stroke="#fff" strokeWidth="1.200" />
                </svg>
              </BlueBox>
              {label}
            </SwitchRow>
          ))}
        </Switches>
      </Options>
      <Actions>
        {ACTIONS.map(({ label, primary, disabled }) => (
          <ActionButton key={label} $primary={primary} disabled={disabled}>
            {label}
          </ActionButton>
        ))}
      </Actions>
    </DialogBody>
  </Dialog>
);

const App = () => {
  return (
    <Window>
      <GlobalStyle />
      <Gradients />
      <TitleBar>
        <Icon name="logo" size={20} />
        <h1>PowerDesigner - [PDM PhysicalDataModel_1, PhysicalDiagram_1]</h1>
        <CaptionButton aria-label="minimize">
          <svg width="12" height="12">
            <path d="M0 5.500h12" stroke="currentColor" />
          </svg>
        </CaptionButton>
        <CaptionButton aria-label="restore">
          <svg width="12" height="12" fill="none" stroke="currentColor">
            <rect x=".5" y="2.500" width="9" height="9" rx="1" />
            <path d="M2.500.5H10q1.500 0 1.500 1.500v7.500" />
          </svg>
        </CaptionButton>
        <CaptionButton aria-label="close" $faint>
          <Cross />
        </CaptionButton>
      </TitleBar>

      <MenuBar>
        <Icon name="model" size={20} />
        <MenuList>
          {MENUS.map((label) => (
            <MenuItem key={label}>{label}</MenuItem>
          ))}
        </MenuList>
        <ChildButton aria-label="minimize diagram">
          <svg width="8" height="8">
            <path d="M1 6h6" stroke="currentColor" strokeWidth="2" />
          </svg>
        </ChildButton>
        <ChildButton aria-label="restore diagram">
          <svg width="8" height="8" fill="none" stroke="currentColor">
            <path d="M.5 4h5v3.500h-5zM2.500 3V1h5v4h-2" strokeWidth="1.400" />
          </svg>
        </ChildButton>
        <ChildButton aria-label="close diagram">
          <Cross size={7} width={3.5} />
        </ChildButton>
      </MenuBar>

      <ToolbarRow>
        {TOOLBARS.map((names, i) => (
          <Toolbar key={i} $first={i === 0}>
            <Grip />
            {renderTools(names)}
          </Toolbar>
        ))}
      </ToolbarRow>

      <Workspace>
        <BrowserPane>
          <PaneHeader>
            <HorizontalGrip />
            <SmallButton aria-label="collapse">
              <Triangle d="M4 2l4 4H0z" />
            </SmallButton>
            <SmallButton aria-label="close browser">
              <Cross size={6} width={3} />
            </SmallButton>
          </PaneHeader>
          <BrowserFrame>
            <BrowserBox>
              <FilterRow>
                <label htmlFor="filter">筛选</label>
                <input id="filter" type="text" />
                <button aria-label="clear filter">
                  <Icon name="filterOff" size={14} />
                </button>
                <button aria-label="refresh">
                  <Icon name="refresh" size={14} />
                </button>
              </FilterRow>
              <Tree>
                <TreeItem $indent={4} $cjk>
                  <Icon name="workspace" />
                  <span>工作空间</span>
                </TreeItem>
                <TreeItem $indent={8} $current>
                  <Toggle aria-label="collapse" />
                  <Dots $width={6} />
                  <Icon name="model" />
                  <span>PhysicalDataModel_1 *</span>
                </TreeItem>
                <TreeItem $indent={35}>
                  <Dots $width={11} />
                  <Icon name="diagramNode" size={14} />
                  <span>PhysicalDiagram_1</span>
                </TreeItem>
                <TreeItem $indent={27}>
                  <Toggle $closed aria-label="expand" />
                  <Dots $width={6} />
                  <Icon name="folder" />
                  <span>Tables</span>
                </TreeItem>
              </Tree>
              <ScrollTrack $size={20} $start={22} $end={22}>
                <ScrollThumb $height={6} />
              </ScrollTrack>
            </BrowserBox>
          </BrowserFrame>
          <BrowserTabs>
            <BrowserTab $active>
              <Icon name="browser" />
              本地
            </BrowserTab>
            <BrowserTab>
              <Icon name="repoTab" />
              仓库(R)
            </BrowserTab>
          </BrowserTabs>
        </BrowserPane>

        <CanvasPane>
          <Canvas>
            <PageEdge $left={428} />
            <PageEdge $left={1284} />
            <Entity $x={576} $y={291} $height={131}>
              <Handle $top={-4} />
              <Handle $top={61} />
              <Handle $top={126} />
              <h2> </h2>
              <Columns>
                <u>id</u>
                <i />
                <i />
                {["用", "密", "是", "创", "更", "角"].map((text) => (
                  <React.Fragment key={text}>
                    <b>{text}</b>
                    <i />
                    <i />
                  </React.Fragment>
                ))}
              </Columns>
            </Entity>
            <Entity $x={932} $y={317} $height={68}>
              <h2>角色表</h2>
              <Columns>
                <u>id</u>
                <span>
                  <u>varchar(36)</u>
                </span>
                <span>
                  <u>&lt;pk&gt;</u>
                </span>
                <b>角色名</b>
                <span>varchar(30)</span>
              </Columns>
            </Entity>
          </Canvas>
          <VerticalTrack $start={373}>
            <VerticalThumb $width={6} $height={21} />
          </VerticalTrack>
          <ScrollTrack $size={20} $start={808}>
            <ScrollThumb $width={95} $height={6} />
          </ScrollTrack>
          <ScrollTrack $size={20} />
        </CanvasPane>
      </Workspace>

      <OutputPane>
        <OutputSide>
          <SmallButton aria-label="close output">
            <Cross size={6} width={3} />
          </SmallButton>
          <SmallButton aria-label="collapse output">
            <Triangle d="M6 0v8L2 4z" />
          </SmallButton>
          <VerticalGrip />
        </OutputSide>
        <OutputBox>
          <OutputText />
          <VerticalTrack $start={15}>
            <VerticalThumb $width={2} $height={60} />
          </VerticalTrack>
          <OutputFooter>
            <TabStrip>
              <StripButton aria-label="previous tab">
                <Triangle d="M6 0v8L2 4z" />
              </StripButton>
              <StripButton aria-label="next tab">
                <Triangle d="M2 0v8l4-4z" />
              </StripButton>
              {OUTPUT_TABS.map(({ label, width }, i) => (
                <StripTab key={label} $width={width} $active={i === 0} $order={4 - i}>
                  {label}
                </StripTab>
              ))}
            </TabStrip>
            <OutputScroll $size={17} $start={16} $end={18}>
              <ScrollThumb $height={2} />
            </OutputScroll>
          </OutputFooter>
          <ScrollTrack $size={17} $start={6}>
            <svg width="8" height="8" fill="#b4b4b4">
              <path d="M6 0h2v2H6zM3 3h2v2H3zM6 3h2v2H6zM0 6h2v2H0zM3 6h2v2H3zM6 6h2v2H6z" />
            </svg>
          </ScrollTrack>
        </OutputBox>
      </OutputPane>

      <StatusBar>
        <span>就绪</span>
        <span>MySQL 5.0</span>
      </StatusBar>

      <ToolbarDialog />
      <Highlight />
      <PaletteWindow>
        <PaletteTitle>
          <span>Pal...</span>
          <button aria-label="close palette">×</button>
        </PaletteTitle>
        <PaletteGrid>{renderTools(PALETTE)}</PaletteGrid>
      </PaletteWindow>
      <Arrow width="478" height="186" viewBox="0 0 478 186">
        <path d="M0 183L457 5l-4-5 23 2-16 17-1-6L1 185z" fill="#22b14c" />
      </Arrow>
      <Watermark>CSDN @红豆810</Watermark>
    </Window>
  );
};

export default App;
